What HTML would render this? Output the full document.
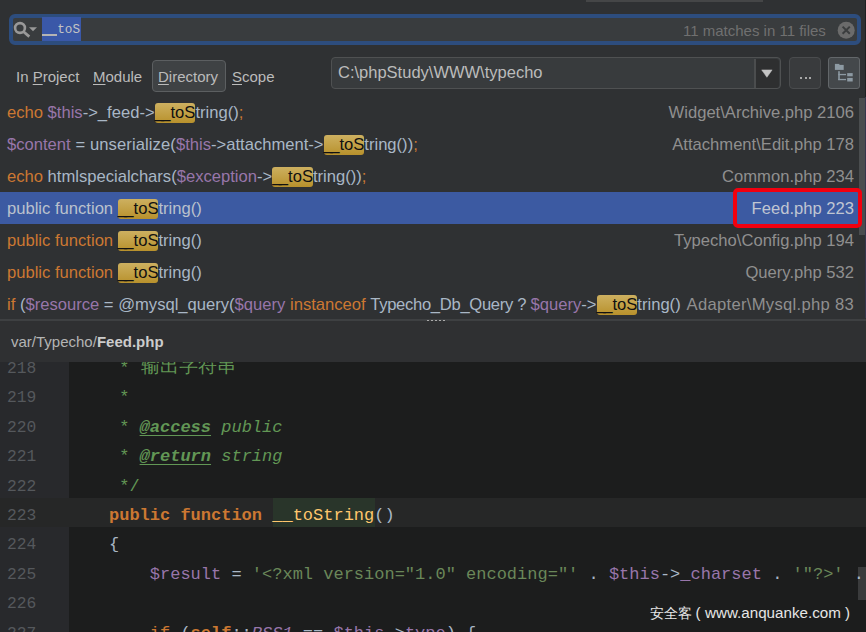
<!DOCTYPE html>
<html><head><meta charset="utf-8"><style>
*{margin:0;padding:0;box-sizing:border-box}
html,body{width:866px;height:632px;overflow:hidden;background:#2f3133;font-family:"Liberation Sans",sans-serif;position:relative}
.abs{position:absolute}
#topline{left:586px;top:0;width:177px;height:1.5px;background:#454647}
#search{left:9px;top:14px;width:852px;height:31px;border:4px solid #2d4d7e;border-radius:6px;background:#393c3e}
#sel{left:42px;top:17px;width:39px;height:24px;background:#3a58a8}
#q{left:42px;top:22px;font-family:"Liberation Mono",monospace;font-size:12.7px;color:#c4c4c4;white-space:pre}
#matches{left:683px;top:22px;font-size:15px;color:#707070}
.tab{position:absolute;top:67.5px;font-size:15px;color:#bbbbbb}
.tab u{text-decoration:underline;text-underline-offset:2px}
#dirbtn{left:152px;top:60px;width:73.5px;height:32px;border:1.5px solid #5c5f61;border-radius:4px;background:#3f4244}
#combo{left:331px;top:57px;width:450px;height:32px;border:1.5px solid #4f5152;border-radius:4px;background:#383b3d}
#combodd{left:754px;top:58.5px;width:25px;height:29px;background:#2e2f30;border-left:2px solid #4b4d4e;border-radius:0 3px 3px 0}
#path{left:338px;top:63px;font-size:16.5px;color:#bbbbbb}
#dots{left:789px;top:57px;width:32px;height:32px;border:1.5px solid #4a4c4e;border-radius:4px;background:#393b3d}
#tree{left:828px;top:57px;width:32px;height:32px;border:1.5px solid #63676a;border-radius:3px;background:#44484b}
.row{position:absolute;left:0;width:858px;height:32px;font-size:16.6px;color:#a9b7c6}
.row.sel{background:#3c5aa2;color:#bac1cd}
.row .l{position:absolute;left:7px;top:7px;white-space:pre}
.row .r{position:absolute;right:4px;top:7px;white-space:pre;color:#8f8f8f}
.row.sel .r{color:#c0c6d2}
.hl{background:linear-gradient(#cdb060,#b8912c);color:#111;border-radius:3px;padding:0 0 1.3px}
#scroll{left:858px;top:96px;width:8px;height:223px;background:#2f3132}
#thumb{left:859px;top:98px;width:6px;height:137px;background:#4a4d4f}
#redbox{left:733px;top:188px;width:129px;height:40px;border:4px solid #f2000f;border-radius:5px}
#sep{left:0;top:319px;width:866px;height:2px;background:#3e4042}
#hdr{left:0;top:321px;width:866px;height:41px;background:#2f3032}
#hdrtxt{left:11px;top:333px;font-size:15px;color:#b4b4b4}
#hdrtxt b{color:#cccccc}
#gutter{left:0;top:362px;width:69px;height:270px;background:#28292c}
#editor{left:69px;top:362px;width:797px;height:270px;background:#1c1d1d;overflow:hidden}
#curline{left:0;top:498px;width:866px;height:29px;background:#262727}
#fnhl{left:273px;top:498px;width:102px;height:29px;background:#29352a}
.cl{position:absolute;left:68.2px;font-family:"Liberation Mono",monospace;font-size:17px;white-space:pre;height:29px;line-height:35px}
.ln{position:absolute;left:7px;font-family:"Liberation Mono",monospace;font-size:16.3px;color:#55585c;height:29px;line-height:35.5px}
.tag{color:#629755;font-weight:bold;font-style:italic;text-decoration:underline;text-decoration-skip-ink:none;text-underline-offset:3px}
.it{color:#629755;font-style:italic}
.kw{color:#cc7832;font-weight:bold}
.fn{color:#ffc66d}
.cst{color:#9876aa;font-style:italic}
.cjk{color:#629755;font-size:18.6px;position:relative;top:-1px;left:1.5px}
.wm{color:#e6e6e6;white-space:pre}
#escroll{left:858px;top:567px;width:8px;height:33px;background:#3a3b3c}
</style></head><body>
<div class="abs" id="topline"></div>
<div class="abs" id="search"></div>
<div class="abs" id="sel"></div>
<svg class="abs" style="left:12px;top:18px" width="30" height="24" viewBox="0 0 30 24">
 <circle cx="8" cy="10" r="4.9" fill="none" stroke="#999" stroke-width="2.6"/>
 <line x1="11.3" y1="13.5" x2="17.3" y2="18.6" stroke="#999" stroke-width="2.8"/>
 <polygon points="17,9.2 25,9.2 21,13.3" fill="#999"/>
</svg>
<div class="abs" id="q">  toS</div>
<div class="abs" style="left:42px;top:34px;width:15px;height:2px;background:#b4b4b4"></div>
<div class="abs" id="matches">11 matches in 11 files</div>
<svg class="abs" style="left:837px;top:21px" width="19" height="19" viewBox="0 0 19 19">
 <circle cx="9.2" cy="9.2" r="8.5" fill="#6b6b6b"/>
 <path d="M5.6 5.6 L12.8 12.8 M12.8 5.6 L5.6 12.8" stroke="#3b3d3e" stroke-width="2"/>
</svg>
<div class="abs" id="dirbtn"></div>
<div class="tab" style="left:16px">In <u>P</u>roject</div>
<div class="tab" style="left:93px"><u>M</u>odule</div>
<div class="tab" style="left:158px"><u>D</u>irectory</div>
<div class="tab" style="left:232px"><u>S</u>cope</div>
<div class="abs" id="combo"></div>
<div class="abs" id="combodd"></div>
<svg class="abs" style="left:760px;top:68px" width="14" height="11" viewBox="0 0 14 11"><polygon points="1.7,1.9 12.1,1.9 6.9,9.3" fill="#c4c4c4" stroke="#c4c4c4" stroke-width="0.5" stroke-linejoin="round"/></svg>
<div class="abs" id="path">C:\phpStudy\WWW\typecho</div>
<div class="abs" id="dots"></div>
<div class="abs" style="left:800px;top:76.5px;width:2px;height:2px;background:#a8a8a8"></div>
<div class="abs" style="left:804.5px;top:76.5px;width:2px;height:2px;background:#a8a8a8"></div>
<div class="abs" style="left:809px;top:76.5px;width:2px;height:2px;background:#a8a8a8"></div>
<div class="abs" id="tree"></div>
<svg class="abs" style="left:828px;top:57px" width="32" height="32" viewBox="828 57 32 32">
 <rect x="834.9" y="63.9" width="4.5" height="1.2" fill="#8d9aa3"/>
 <rect x="834.9" y="64.9" width="8.8" height="5" fill="#8d9aa3"/>
 <rect x="838.2" y="71.2" width="1.6" height="8.9" fill="#8d9aa3"/>
 <rect x="838.2" y="73.9" width="7.8" height="1.3" fill="#8d9aa3"/>
 <rect x="838.2" y="78.9" width="7.8" height="1.3" fill="#8d9aa3"/>
 <rect x="847.2" y="73.1" width="5.5" height="3.2" fill="#8d9aa3"/>
 <rect x="847.2" y="77.9" width="5.5" height="3.6" fill="#8d9aa3"/>
</svg>
<div class="row" style="top:96px"><div class="l"><span style="color:#cc7832">echo </span><span style="color:#9876aa">$this</span><span style="color:#a9b7c6">-&gt;_feed-&gt;</span><span class="hl"><span style="letter-spacing:-2.6px">_</span>_toS</span><span style="color:#a9b7c6">tring()</span><span style="color:#cc7832">;</span></div><div class="r">Widget\Archive.php 2106</div></div>
<div class="row" style="top:128px"><div class="l"><span style="color:#9876aa">$content</span><span style="color:#a9b7c6;letter-spacing:0.1px"> = unserialize(</span><span style="color:#9876aa">$this</span><span style="color:#a9b7c6">-&gt;attachment-&gt;</span><span class="hl"><span style="letter-spacing:-2.6px">_</span>_toS</span><span style="color:#a9b7c6">tring())</span><span style="color:#cc7832">;</span></div><div class="r">Attachment\Edit.php 178</div></div>
<div class="row" style="top:160px"><div class="l"><span style="color:#cc7832">echo </span><span style="color:#a9b7c6">htmlspecialchars(</span><span style="color:#9876aa">$exception</span><span style="color:#a9b7c6">-&gt;</span><span class="hl"><span style="letter-spacing:-2.6px">_</span>_toS</span><span style="color:#a9b7c6">tring())</span><span style="color:#cc7832">;</span></div><div class="r">Common.php 234</div></div>
<div class="row sel" style="top:192px"><div class="l">public function <span class="hl"><span style="letter-spacing:-2.6px">_</span>_toS</span>tring()</div><div class="r">Feed.php 223</div></div>
<div class="row" style="top:224px"><div class="l"><span style="color:#cc7832">public function </span><span class="hl"><span style="letter-spacing:-2.6px">_</span>_toS</span><span style="color:#a9b7c6">tring()</span></div><div class="r">Typecho\Config.php 194</div></div>
<div class="row" style="top:256px"><div class="l"><span style="color:#cc7832">public function </span><span class="hl"><span style="letter-spacing:-2.6px">_</span>_toS</span><span style="color:#a9b7c6">tring()</span></div><div class="r">Query.php 532</div></div>
<div class="row" style="top:288px"><div class="l"><span style="color:#cc7832">if </span><span style="color:#a9b7c6">(</span><span style="color:#9876aa">$resource</span><span style="color:#a9b7c6"> = @mysql_query(</span><span style="color:#9876aa">$query</span><span style="color:#cc7832"> instanceof </span><span style="color:#a9b7c6;letter-spacing:-0.3px">Typecho_Db_Query ? </span><span style="color:#9876aa">$query</span><span style="color:#a9b7c6">-&gt;</span><span class="hl"><span style="letter-spacing:-2.6px">_</span>_toS</span><span style="color:#a9b7c6">tring()</span></div><div class="r" style="letter-spacing:0.3px">Adapter\Mysql.php 83</div></div>

<div class="abs" id="scroll"></div>
<div class="abs" id="thumb"></div>
<div class="abs" id="redbox"></div>
<div class="abs" style="left:865px;top:0;width:1px;height:97px;background:#1f2022"></div>
<div class="abs" style="left:865px;top:97px;width:1px;height:221px;background:#36364c"></div>
<div class="abs" id="sep"></div>
<div class="abs" style="left:427px;top:320px;width:2px;height:2px;background:#aaa"></div>
<div class="abs" style="left:431px;top:320px;width:2px;height:2px;background:#aaa"></div>
<div class="abs" style="left:435px;top:320px;width:2px;height:2px;background:#aaa"></div>
<div class="abs" style="left:439px;top:320px;width:2px;height:2px;background:#aaa"></div>
<div class="abs" style="left:443px;top:320px;width:2px;height:2px;background:#aaa"></div>
<div class="abs" id="gutter"></div>
<div class="abs" id="editor"></div>
<div class="abs" id="curline"></div>
<div class="abs" id="fnhl"></div>
<div class="abs" id="escroll"></div>
<div class="ln" style="top:351.0px">218</div>
<div class="ln" style="top:380.4px">219</div>
<div class="ln" style="top:409.8px">220</div>
<div class="ln" style="top:439.2px">221</div>
<div class="ln" style="top:468.6px">222</div>
<div class="ln" style="top:498.0px">223</div>
<div class="ln" style="top:527.4px">224</div>
<div class="ln" style="top:556.8px">225</div>
<div class="ln" style="top:586.2px">226</div>
<div class="ln" style="top:615.6px">227</div>
<div class="cl" style="top:351.0px"><span style="color:#629755">     * </span><span class="cjk">输出字符串</span></div>
<div class="cl" style="top:380.4px"><span style="color:#629755">     *</span></div>
<div class="cl" style="top:409.8px"><span style="color:#629755">     * </span><span class="tag">@access</span><span style="color:#629755"> </span><span class="it">public</span></div>
<div class="cl" style="top:439.2px"><span style="color:#629755">     * </span><span class="tag">@return</span><span style="color:#629755"> </span><span class="it">string</span></div>
<div class="cl" style="top:468.6px"><span style="color:#629755">     */</span></div>
<div class="cl" style="top:498.0px"><span class="kw">    public function </span><span class="fn">__toString</span><span style="color:#a9b7c6">()</span></div>
<div class="cl" style="top:527.4px"><span style="color:#a9b7c6">    {</span></div>
<div class="cl" style="top:556.8px"><span style="color:#9876aa">        $result</span><span style="color:#a9b7c6"> = </span><span style="color:#6a8759">'&lt;?xml version="1.0" encoding="'</span><span style="color:#a9b7c6"> . </span><span style="color:#9876aa">$this</span><span style="color:#a9b7c6">-&gt;</span><span style="color:#9876aa">_charset</span><span style="color:#a9b7c6"> . </span><span style="color:#6a8759">'"?&gt;'</span><span style="color:#a9b7c6"> .</span></div>
<div class="cl" style="top:586.2px"><span style="color:#a9b7c6"></span></div>
<div class="cl" style="top:615.6px"><span style="color:#cc7832">        if </span><span style="color:#a9b7c6">(</span><span class="kw">self</span><span style="color:#a9b7c6">::</span><span class="cst">RSS1</span><span style="color:#a9b7c6"> == </span><span style="color:#9876aa">$this</span><span style="color:#a9b7c6">-&gt;</span><span style="color:#9876aa">type</span><span style="color:#a9b7c6">) {</span></div>

<div class="abs" id="hdr"></div>
<div class="abs" id="hdrtxt">var/Typecho/<b>Feed.php</b></div>
<div class="abs wm" style="left:650px;top:604px;font-size:14px;line-height:18px">安全客</div>
<div class="abs wm" style="left:695.5px;top:604px;font-size:15px;line-height:17px">(</div>
<div class="abs wm" style="left:705px;top:603.5px;font-size:15.2px;line-height:17px">www.anquanke.com</div>
<div class="abs wm" style="left:845px;top:604px;font-size:15px;line-height:17px">)</div>
</body></html>
